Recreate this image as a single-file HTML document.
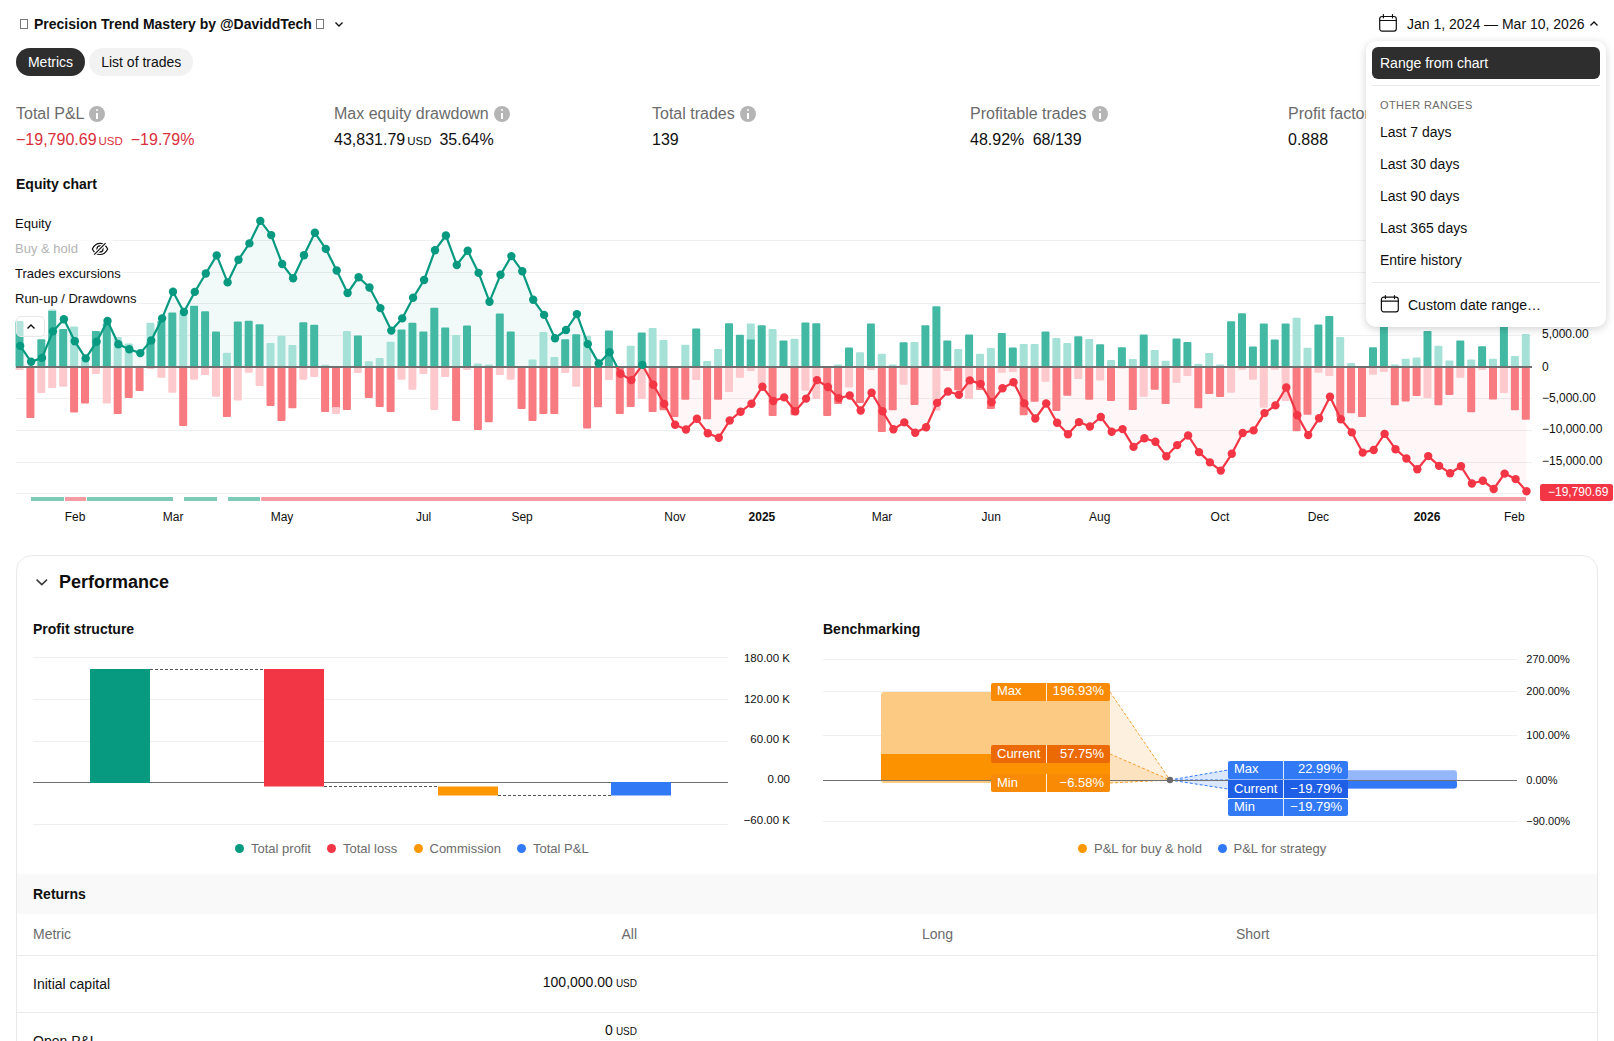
<!DOCTYPE html>
<html><head><meta charset="utf-8">
<style>
*{box-sizing:border-box;margin:0;padding:0}
html,body{width:1614px;height:1041px;overflow:hidden;background:#fff;font-family:"Liberation Sans",sans-serif;color:#0f0f0f}
.a{position:absolute;white-space:nowrap}
.tofu{display:inline-block;width:8px;height:10px;border:1px solid #333;vertical-align:-1px}
.pill{position:absolute;top:48px;height:28px;border-radius:14px;font-size:14px;line-height:28px;text-align:center}
.mlab{position:absolute;top:105px;font-size:16px;color:#6b6b6b;line-height:18px}
.info{display:inline-block;width:16px;height:16px;border-radius:50%;background:#b5b5b5;vertical-align:-3px;margin-left:5px;position:relative}
.info:before{content:"";position:absolute;left:7px;top:2.8px;width:2px;height:2px;background:#fff;border-radius:1px}
.info:after{content:"";position:absolute;left:7px;top:6.5px;width:2px;height:6px;background:#fff}
.mval{position:absolute;top:130.7px;font-size:16px;line-height:18px;color:#0f0f0f}
.usd{font-size:11.5px;margin-left:2px;margin-right:3.5px}
.red{color:#d92f3d}
.leg{position:absolute;left:15px;margin-top:0.7px;font-size:13px;line-height:16px;color:#0f0f0f}
.ylab{position:absolute;left:1542px;font-size:12px;line-height:14px;color:#0f0f0f}
.xlab{position:absolute;top:510px;font-size:12px;line-height:14px;color:#0f0f0f;transform:translateX(-50%)}
.dd{position:absolute;left:1366px;top:41px;width:240px;height:286px;background:#fff;border-radius:10px;box-shadow:0 2px 8px rgba(0,0,0,.18)}
.ddi{position:absolute;left:14px;font-size:14px;line-height:16px;color:#0f0f0f}
.sep{position:absolute;left:6px;width:228px;height:1px;background:#e9e9e9}
.card{position:absolute;left:16px;top:555px;width:1582px;height:600px;border:1px solid #e9e9e9;border-radius:16px;background:#fff}
.sub{position:absolute;font-size:14px;font-weight:bold;line-height:16px;color:#0f0f0f}
.axl{position:absolute;font-size:11.5px;line-height:13px;color:#0f0f0f}
.lg{position:absolute;top:841px;font-size:13px;line-height:15px;color:#6b6b6b}
.dot{position:absolute;top:844px;width:9px;height:9px;border-radius:50%}
.bl{position:absolute;left:991px;width:119px;height:17.6px;border-radius:2px;color:#fff;font-size:13px;line-height:16px}
.bl span{position:absolute;left:6px}
.bl b{font-weight:normal;position:absolute;right:6px}
.bl:after{content:"";position:absolute;left:55px;top:0;width:1px;height:100%;background:rgba(255,255,255,.85)}
.bb{left:1228px;width:120px}
</style></head><body>

<!-- header -->
<div class="a" style="left:20px;top:19px;width:8px;height:10px;border:1px solid #7a7a7a"></div><div class="a" style="left:34px;top:16px;font-size:14px;font-weight:bold;line-height:17px">Precision Trend Mastery by @DaviddTech</div><div class="a" style="left:316px;top:19px;width:8px;height:10px;border:1px solid #7a7a7a"></div>
<svg class="a" style="left:333px;top:18px" width="12" height="12" viewBox="0 0 12 12"><path d="M2.5 4.5 L6 8 L9.5 4.5" fill="none" stroke="#0f0f0f" stroke-width="1.3"/></svg>

<div class="pill" style="left:16px;width:69px;background:#2e2e2e;color:#fff">Metrics</div>
<div class="pill" style="left:89px;width:103.5px;padding-left:1px;background:#f2f2f2;color:#0f0f0f">List of trades</div>

<!-- date picker -->
<svg class="a" style="left:1378px;top:13px" width="20" height="20" viewBox="0 0 20 20"><rect x="1.7" y="3.5" width="16.6" height="14.6" rx="2.3" fill="none" stroke="#0f0f0f" stroke-width="1.2"/><path d="M1.7 7.5H18.3M5.4 1.6V4.8M14.5 1.6V4.8" stroke="#0f0f0f" stroke-width="1.2" stroke-linecap="round"/></svg>
<div class="a" style="left:1407px;top:16px;font-size:14px;line-height:16px">Jan 1, 2024 — Mar 10, 2026</div>
<svg class="a" style="left:1588px;top:18px" width="12" height="12" viewBox="0 0 12 12"><path d="M2.5 7.5 L6 4 L9.5 7.5" fill="none" stroke="#0f0f0f" stroke-width="1.3"/></svg>

<!-- metrics -->
<div class="mlab" style="left:16px">Total P&amp;L<span class="info"></span></div>
<div class="mval red" style="left:16px">−19,790.69<span class="usd">USD</span> −19.79%</div>
<div class="mlab" style="left:334px">Max equity drawdown<span class="info"></span></div>
<div class="mval" style="left:334px">43,831.79<span class="usd">USD</span> 35.64%</div>
<div class="mlab" style="left:652px">Total trades<span class="info"></span></div>
<div class="mval" style="left:652px">139</div>
<div class="mlab" style="left:970px">Profitable trades<span class="info"></span></div>
<div class="mval" style="left:970px">48.92% <span style="margin-left:4px">68/139</span></div>
<div class="mlab" style="left:1288px">Profit factor</div>
<div class="mval" style="left:1288px">0.888</div>

<!-- equity chart -->
<div class="sub" style="left:16px;top:176px;font-size:14px">Equity chart</div>
<svg class="a" style="left:0;top:0" width="1614" height="540" viewBox="0 0 1614 540">
<defs><clipPath id="cu"><rect x="0" y="0" width="1614" height="367"/></clipPath><clipPath id="cd"><rect x="0" y="367" width="1614" height="200"/></clipPath></defs>
<rect x="16" y="240.0" width="1516" height="1" fill="#efefef"/>
<rect x="16" y="272.0" width="1516" height="1" fill="#efefef"/>
<rect x="16" y="303.0" width="1516" height="1" fill="#efefef"/>
<rect x="16" y="335.0" width="1516" height="1" fill="#efefef"/>
<rect x="16" y="398.0" width="1516" height="1" fill="#efefef"/>
<rect x="16" y="430.0" width="1516" height="1" fill="#efefef"/>
<rect x="16" y="462.0" width="1516" height="1" fill="#efefef"/>
<rect x="16" y="493.0" width="1516" height="1" fill="#efefef"/>
<polygon points="20.2,367.0 20.2,345.9 31.1,361.8 42.0,357.9 52.9,331.4 63.9,319.2 74.8,341.3 85.7,358.4 96.6,341.8 107.5,321.0 118.4,344.3 129.3,349.2 140.3,353.1 151.2,340.5 162.1,318.4 173.0,291.7 183.9,312.0 194.8,291.9 205.8,273.5 216.7,255.4 227.6,282.4 238.5,259.7 249.4,243.4 260.3,220.9 271.2,235.1 282.2,264.0 293.1,278.3 304.0,255.3 314.9,232.8 325.8,248.9 336.7,270.5 347.6,293.0 358.6,277.2 369.5,287.5 380.4,308.1 391.3,330.6 402.2,318.4 413.1,297.8 424.1,280.0 435.0,250.2 445.9,235.5 456.8,265.0 467.7,250.7 478.6,272.9 489.5,301.7 500.5,274.8 511.4,256.1 522.3,271.3 533.2,299.8 544.1,314.9 555.0,338.2 566.0,330.0 576.9,314.1 587.8,344.1 598.7,363.4 609.6,352.2 620.5,373.7 631.4,380.1 642.4,364.9 653.3,384.8 664.2,403.9 675.1,424.8 686.0,429.5 696.9,418.8 707.8,433.2 718.8,437.8 729.7,420.5 740.6,411.7 751.5,403.7 762.4,386.7 773.3,401.0 784.2,397.4 795.2,411.3 806.1,398.6 817.0,380.1 827.9,387.0 838.8,398.2 849.7,395.5 860.7,410.5 871.6,392.8 882.5,411.3 893.4,429.2 904.3,422.4 915.2,432.7 926.1,427.2 937.1,402.9 948.0,391.5 958.9,394.7 969.8,380.4 980.7,383.9 991.6,402.3 1002.5,388.3 1013.5,382.3 1024.4,403.4 1035.3,418.5 1046.2,403.5 1057.1,422.7 1068.0,434.2 1079.0,422.1 1089.9,426.5 1100.8,417.0 1111.7,431.7 1122.6,429.1 1133.5,446.9 1144.4,438.2 1155.4,441.7 1166.3,456.2 1177.2,445.1 1188.1,435.5 1199.0,452.1 1209.9,462.4 1220.8,470.6 1231.8,453.8 1242.7,433.0 1253.6,430.4 1264.5,413.1 1275.4,405.4 1286.3,387.5 1297.3,415.2 1308.2,435.1 1319.1,418.2 1330.0,396.7 1340.9,419.3 1351.8,432.4 1362.7,452.6 1373.7,450.0 1384.6,433.9 1395.5,449.2 1406.4,458.5 1417.3,469.3 1428.2,456.1 1439.1,465.9 1450.1,473.2 1461.0,466.3 1471.9,483.5 1482.8,480.7 1493.7,489.0 1504.6,473.6 1515.6,479.1 1526.5,491.3 1526.5,367.0" fill="rgba(8,153,129,0.05)" clip-path="url(#cu)"/>
<polygon points="20.2,367.0 20.2,345.9 31.1,361.8 42.0,357.9 52.9,331.4 63.9,319.2 74.8,341.3 85.7,358.4 96.6,341.8 107.5,321.0 118.4,344.3 129.3,349.2 140.3,353.1 151.2,340.5 162.1,318.4 173.0,291.7 183.9,312.0 194.8,291.9 205.8,273.5 216.7,255.4 227.6,282.4 238.5,259.7 249.4,243.4 260.3,220.9 271.2,235.1 282.2,264.0 293.1,278.3 304.0,255.3 314.9,232.8 325.8,248.9 336.7,270.5 347.6,293.0 358.6,277.2 369.5,287.5 380.4,308.1 391.3,330.6 402.2,318.4 413.1,297.8 424.1,280.0 435.0,250.2 445.9,235.5 456.8,265.0 467.7,250.7 478.6,272.9 489.5,301.7 500.5,274.8 511.4,256.1 522.3,271.3 533.2,299.8 544.1,314.9 555.0,338.2 566.0,330.0 576.9,314.1 587.8,344.1 598.7,363.4 609.6,352.2 620.5,373.7 631.4,380.1 642.4,364.9 653.3,384.8 664.2,403.9 675.1,424.8 686.0,429.5 696.9,418.8 707.8,433.2 718.8,437.8 729.7,420.5 740.6,411.7 751.5,403.7 762.4,386.7 773.3,401.0 784.2,397.4 795.2,411.3 806.1,398.6 817.0,380.1 827.9,387.0 838.8,398.2 849.7,395.5 860.7,410.5 871.6,392.8 882.5,411.3 893.4,429.2 904.3,422.4 915.2,432.7 926.1,427.2 937.1,402.9 948.0,391.5 958.9,394.7 969.8,380.4 980.7,383.9 991.6,402.3 1002.5,388.3 1013.5,382.3 1024.4,403.4 1035.3,418.5 1046.2,403.5 1057.1,422.7 1068.0,434.2 1079.0,422.1 1089.9,426.5 1100.8,417.0 1111.7,431.7 1122.6,429.1 1133.5,446.9 1144.4,438.2 1155.4,441.7 1166.3,456.2 1177.2,445.1 1188.1,435.5 1199.0,452.1 1209.9,462.4 1220.8,470.6 1231.8,453.8 1242.7,433.0 1253.6,430.4 1264.5,413.1 1275.4,405.4 1286.3,387.5 1297.3,415.2 1308.2,435.1 1319.1,418.2 1330.0,396.7 1340.9,419.3 1351.8,432.4 1362.7,452.6 1373.7,450.0 1384.6,433.9 1395.5,449.2 1406.4,458.5 1417.3,469.3 1428.2,456.1 1439.1,465.9 1450.1,473.2 1461.0,466.3 1471.9,483.5 1482.8,480.7 1493.7,489.0 1504.6,473.6 1515.6,479.1 1526.5,491.3 1526.5,367.0" fill="rgba(242,54,69,0.045)" clip-path="url(#cd)"/>
<rect x="15.5" y="321.0" width="8" height="46.0" rx="1" fill="#43b9a3"/>
<rect x="15.5" y="367.0" width="8" height="2.9" rx="1" fill="#fdc9cc"/>
<rect x="26.4" y="367.0" width="8" height="51.0" rx="1" fill="#f77b80"/>
<rect x="37.3" y="339.3" width="8" height="27.7" rx="1" fill="#43b9a3"/>
<rect x="37.3" y="367.0" width="8" height="26.0" rx="1" fill="#fdc9cc"/>
<rect x="48.2" y="309.4" width="8" height="57.6" rx="1" fill="#43b9a3"/>
<rect x="48.2" y="367.0" width="8" height="21.0" rx="1" fill="#fdc9cc"/>
<rect x="59.2" y="329.0" width="8" height="38.0" rx="1" fill="#43b9a3"/>
<rect x="59.2" y="367.0" width="8" height="19.8" rx="1" fill="#fdc9cc"/>
<rect x="70.1" y="326.6" width="8" height="40.4" rx="1" fill="#a6e1d8"/>
<rect x="70.1" y="367.0" width="8" height="45.4" rx="1" fill="#f77b80"/>
<rect x="81.0" y="360.0" width="8" height="7.0" rx="1" fill="#a6e1d8"/>
<rect x="81.0" y="367.0" width="8" height="36.4" rx="1" fill="#f77b80"/>
<rect x="91.9" y="331.0" width="8" height="36.0" rx="1" fill="#43b9a3"/>
<rect x="91.9" y="367.0" width="8" height="6.9" rx="1" fill="#fdc9cc"/>
<rect x="102.8" y="323.2" width="8" height="43.8" rx="1" fill="#43b9a3"/>
<rect x="102.8" y="367.0" width="8" height="36.6" rx="1" fill="#fdc9cc"/>
<rect x="113.7" y="336.9" width="8" height="30.1" rx="1" fill="#a6e1d8"/>
<rect x="113.7" y="367.0" width="8" height="47.0" rx="1" fill="#f77b80"/>
<rect x="124.7" y="343.4" width="8" height="23.6" rx="1" fill="#a6e1d8"/>
<rect x="124.7" y="367.0" width="8" height="31.0" rx="1" fill="#f77b80"/>
<rect x="135.6" y="365.7" width="8" height="1.3" rx="1" fill="#a6e1d8"/>
<rect x="135.6" y="367.0" width="8" height="24.0" rx="1" fill="#f77b80"/>
<rect x="146.5" y="322.7" width="8" height="44.3" rx="1" fill="#a6e1d8"/>
<rect x="146.5" y="342.0" width="8" height="25.0" fill="#43b9a3"/>
<rect x="146.5" y="367.0" width="8" height="2.1" rx="1" fill="#fdc9cc"/>
<rect x="157.4" y="320.8" width="8" height="46.2" rx="1" fill="#43b9a3"/>
<rect x="157.4" y="367.0" width="8" height="10.8" rx="1" fill="#fdc9cc"/>
<rect x="168.3" y="312.5" width="8" height="54.5" rx="1" fill="#43b9a3"/>
<rect x="168.3" y="367.0" width="8" height="25.7" rx="1" fill="#fdc9cc"/>
<rect x="179.2" y="312.8" width="8" height="54.2" rx="1" fill="#a6e1d8"/>
<rect x="179.2" y="367.0" width="8" height="58.9" rx="1" fill="#f77b80"/>
<rect x="190.1" y="305.7" width="8" height="61.3" rx="1" fill="#43b9a3"/>
<rect x="190.1" y="367.0" width="8" height="12.8" rx="1" fill="#fdc9cc"/>
<rect x="201.1" y="311.2" width="8" height="55.8" rx="1" fill="#43b9a3"/>
<rect x="201.1" y="367.0" width="8" height="7.9" rx="1" fill="#fdc9cc"/>
<rect x="212.0" y="331.4" width="8" height="35.6" rx="1" fill="#43b9a3"/>
<rect x="212.0" y="367.0" width="8" height="29.7" rx="1" fill="#fdc9cc"/>
<rect x="222.9" y="352.8" width="8" height="14.2" rx="1" fill="#a6e1d8"/>
<rect x="222.9" y="367.0" width="8" height="50.0" rx="1" fill="#f77b80"/>
<rect x="233.8" y="321.6" width="8" height="45.4" rx="1" fill="#43b9a3"/>
<rect x="233.8" y="367.0" width="8" height="33.6" rx="1" fill="#fdc9cc"/>
<rect x="244.7" y="320.8" width="8" height="46.2" rx="1" fill="#43b9a3"/>
<rect x="244.7" y="367.0" width="8" height="5.7" rx="1" fill="#fdc9cc"/>
<rect x="255.6" y="324.3" width="8" height="42.7" rx="1" fill="#43b9a3"/>
<rect x="255.6" y="367.0" width="8" height="19.0" rx="1" fill="#fdc9cc"/>
<rect x="266.5" y="343.0" width="8" height="24.0" rx="1" fill="#a6e1d8"/>
<rect x="266.5" y="367.0" width="8" height="39.1" rx="1" fill="#f77b80"/>
<rect x="277.5" y="335.8" width="8" height="31.2" rx="1" fill="#a6e1d8"/>
<rect x="277.5" y="367.0" width="8" height="54.0" rx="1" fill="#f77b80"/>
<rect x="288.4" y="344.9" width="8" height="22.1" rx="1" fill="#a6e1d8"/>
<rect x="288.4" y="367.0" width="8" height="41.2" rx="1" fill="#f77b80"/>
<rect x="299.3" y="322.3" width="8" height="44.7" rx="1" fill="#43b9a3"/>
<rect x="299.3" y="367.0" width="8" height="12.8" rx="1" fill="#fdc9cc"/>
<rect x="310.2" y="324.7" width="8" height="42.3" rx="1" fill="#43b9a3"/>
<rect x="310.2" y="367.0" width="8" height="9.9" rx="1" fill="#fdc9cc"/>
<rect x="321.1" y="364.8" width="8" height="2.2" rx="1" fill="#a6e1d8"/>
<rect x="321.1" y="367.0" width="8" height="45.0" rx="1" fill="#f77b80"/>
<rect x="332.0" y="367.0" width="8" height="47.0" rx="1" fill="#fdc9cc"/>
<rect x="332.0" y="367.0" width="8" height="40.1" fill="#f77b80"/>
<rect x="342.9" y="331.1" width="8" height="35.9" rx="1" fill="#a6e1d8"/>
<rect x="342.9" y="367.0" width="8" height="43.1" rx="1" fill="#f77b80"/>
<rect x="353.9" y="335.4" width="8" height="31.6" rx="1" fill="#43b9a3"/>
<rect x="353.9" y="367.0" width="8" height="5.9" rx="1" fill="#fdc9cc"/>
<rect x="364.8" y="361.2" width="8" height="5.8" rx="1" fill="#a6e1d8"/>
<rect x="364.8" y="367.0" width="8" height="31.0" rx="1" fill="#f77b80"/>
<rect x="375.7" y="358.0" width="8" height="9.0" rx="1" fill="#a6e1d8"/>
<rect x="375.7" y="367.0" width="8" height="40.1" rx="1" fill="#f77b80"/>
<rect x="386.6" y="341.7" width="8" height="25.3" rx="1" fill="#a6e1d8"/>
<rect x="386.6" y="367.0" width="8" height="45.0" rx="1" fill="#f77b80"/>
<rect x="397.5" y="329.5" width="8" height="37.5" rx="1" fill="#43b9a3"/>
<rect x="397.5" y="367.0" width="8" height="12.8" rx="1" fill="#fdc9cc"/>
<rect x="408.4" y="322.7" width="8" height="44.3" rx="1" fill="#43b9a3"/>
<rect x="408.4" y="367.0" width="8" height="22.7" rx="1" fill="#fdc9cc"/>
<rect x="419.4" y="331.4" width="8" height="35.6" rx="1" fill="#43b9a3"/>
<rect x="419.4" y="367.0" width="8" height="6.9" rx="1" fill="#fdc9cc"/>
<rect x="430.3" y="307.8" width="8" height="59.2" rx="1" fill="#43b9a3"/>
<rect x="430.3" y="367.0" width="8" height="43.1" rx="1" fill="#fdc9cc"/>
<rect x="441.2" y="327.4" width="8" height="39.6" rx="1" fill="#43b9a3"/>
<rect x="441.2" y="367.0" width="8" height="9.9" rx="1" fill="#fdc9cc"/>
<rect x="452.1" y="335.0" width="8" height="32.0" rx="1" fill="#a6e1d8"/>
<rect x="452.1" y="367.0" width="8" height="54.0" rx="1" fill="#f77b80"/>
<rect x="463.0" y="325.5" width="8" height="41.5" rx="1" fill="#43b9a3"/>
<rect x="463.0" y="367.0" width="8" height="2.9" rx="1" fill="#fdc9cc"/>
<rect x="473.9" y="363.6" width="8" height="3.4" rx="1" fill="#a6e1d8"/>
<rect x="473.9" y="367.0" width="8" height="62.9" rx="1" fill="#f77b80"/>
<rect x="484.8" y="364.4" width="8" height="2.6" rx="1" fill="#a6e1d8"/>
<rect x="484.8" y="367.0" width="8" height="55.2" rx="1" fill="#f77b80"/>
<rect x="495.8" y="313.6" width="8" height="53.4" rx="1" fill="#43b9a3"/>
<rect x="495.8" y="367.0" width="8" height="7.9" rx="1" fill="#fdc9cc"/>
<rect x="506.7" y="331.4" width="8" height="35.6" rx="1" fill="#43b9a3"/>
<rect x="506.7" y="367.0" width="8" height="12.8" rx="1" fill="#fdc9cc"/>
<rect x="517.6" y="367.0" width="8" height="42.1" rx="1" fill="#f77b80"/>
<rect x="528.5" y="359.6" width="8" height="7.4" rx="1" fill="#a6e1d8"/>
<rect x="528.5" y="367.0" width="8" height="54.0" rx="1" fill="#f77b80"/>
<rect x="539.4" y="331.9" width="8" height="35.1" rx="1" fill="#a6e1d8"/>
<rect x="539.4" y="367.0" width="8" height="47.0" rx="1" fill="#f77b80"/>
<rect x="550.3" y="357.0" width="8" height="10.0" rx="1" fill="#a6e1d8"/>
<rect x="550.3" y="367.0" width="8" height="47.0" rx="1" fill="#f77b80"/>
<rect x="561.2" y="339.3" width="8" height="27.7" rx="1" fill="#43b9a3"/>
<rect x="561.2" y="367.0" width="8" height="5.9" rx="1" fill="#fdc9cc"/>
<rect x="572.2" y="334.2" width="8" height="32.8" rx="1" fill="#43b9a3"/>
<rect x="572.2" y="367.0" width="8" height="19.8" rx="1" fill="#fdc9cc"/>
<rect x="583.1" y="335.8" width="8" height="31.2" rx="1" fill="#a6e1d8"/>
<rect x="583.1" y="367.0" width="8" height="61.5" rx="1" fill="#f77b80"/>
<rect x="594.0" y="367.0" width="8" height="40.3" rx="1" fill="#f77b80"/>
<rect x="604.9" y="330.4" width="8" height="36.6" rx="1" fill="#43b9a3"/>
<rect x="604.9" y="367.0" width="8" height="13.1" rx="1" fill="#fdc9cc"/>
<rect x="615.8" y="367.0" width="8" height="47.0" rx="1" fill="#f77b80"/>
<rect x="626.7" y="345.8" width="8" height="21.2" rx="1" fill="#a6e1d8"/>
<rect x="626.7" y="367.0" width="8" height="40.0" rx="1" fill="#f77b80"/>
<rect x="637.7" y="332.5" width="8" height="34.5" rx="1" fill="#43b9a3"/>
<rect x="637.7" y="367.0" width="8" height="32.1" rx="1" fill="#fdc9cc"/>
<rect x="648.6" y="328.1" width="8" height="38.9" rx="1" fill="#a6e1d8"/>
<rect x="648.6" y="367.0" width="8" height="45.1" rx="1" fill="#f77b80"/>
<rect x="659.5" y="340.0" width="8" height="27.0" rx="1" fill="#a6e1d8"/>
<rect x="659.5" y="367.0" width="8" height="43.2" rx="1" fill="#f77b80"/>
<rect x="670.4" y="367.0" width="8" height="49.9" rx="1" fill="#f77b80"/>
<rect x="681.3" y="344.7" width="8" height="22.3" rx="1" fill="#a6e1d8"/>
<rect x="681.3" y="367.0" width="8" height="32.7" rx="1" fill="#f77b80"/>
<rect x="692.2" y="328.4" width="8" height="38.6" rx="1" fill="#43b9a3"/>
<rect x="692.2" y="367.0" width="8" height="13.1" rx="1" fill="#fdc9cc"/>
<rect x="703.1" y="360.9" width="8" height="6.1" rx="1" fill="#a6e1d8"/>
<rect x="703.1" y="367.0" width="8" height="52.2" rx="1" fill="#f77b80"/>
<rect x="714.1" y="349.0" width="8" height="18.0" rx="1" fill="#a6e1d8"/>
<rect x="714.1" y="367.0" width="8" height="32.7" rx="1" fill="#f77b80"/>
<rect x="725.0" y="323.3" width="8" height="43.7" rx="1" fill="#43b9a3"/>
<rect x="725.0" y="367.0" width="8" height="25.0" rx="1" fill="#fdc9cc"/>
<rect x="735.9" y="334.7" width="8" height="32.3" rx="1" fill="#43b9a3"/>
<rect x="735.9" y="367.0" width="8" height="10.8" rx="1" fill="#fdc9cc"/>
<rect x="746.8" y="323.6" width="8" height="43.4" rx="1" fill="#a6e1d8"/>
<rect x="746.8" y="339.5" width="8" height="27.5" fill="#43b9a3"/>
<rect x="746.8" y="367.0" width="8" height="3.9" rx="1" fill="#fdc9cc"/>
<rect x="757.7" y="325.2" width="8" height="41.8" rx="1" fill="#43b9a3"/>
<rect x="757.7" y="367.0" width="8" height="17.4" rx="1" fill="#fdc9cc"/>
<rect x="768.6" y="328.9" width="8" height="38.1" rx="1" fill="#a6e1d8"/>
<rect x="768.6" y="367.0" width="8" height="49.1" rx="1" fill="#f77b80"/>
<rect x="779.5" y="340.4" width="8" height="26.6" rx="1" fill="#43b9a3"/>
<rect x="790.5" y="338.8" width="8" height="28.2" rx="1" fill="#a6e1d8"/>
<rect x="790.5" y="367.0" width="8" height="48.3" rx="1" fill="#f77b80"/>
<rect x="801.4" y="322.5" width="8" height="44.5" rx="1" fill="#43b9a3"/>
<rect x="801.4" y="367.0" width="8" height="23.7" rx="1" fill="#fdc9cc"/>
<rect x="812.3" y="323.3" width="8" height="43.7" rx="1" fill="#43b9a3"/>
<rect x="812.3" y="367.0" width="8" height="32.1" rx="1" fill="#fdc9cc"/>
<rect x="823.2" y="367.0" width="8" height="49.1" rx="1" fill="#f77b80"/>
<rect x="834.1" y="364.5" width="8" height="2.5" rx="1" fill="#a6e1d8"/>
<rect x="834.1" y="367.0" width="8" height="36.9" rx="1" fill="#f77b80"/>
<rect x="845.0" y="347.4" width="8" height="19.6" rx="1" fill="#43b9a3"/>
<rect x="845.0" y="367.0" width="8" height="20.5" rx="1" fill="#fdc9cc"/>
<rect x="856.0" y="352.2" width="8" height="14.8" rx="1" fill="#a6e1d8"/>
<rect x="856.0" y="367.0" width="8" height="35.9" rx="1" fill="#f77b80"/>
<rect x="866.9" y="323.6" width="8" height="43.4" rx="1" fill="#43b9a3"/>
<rect x="866.9" y="367.0" width="8" height="3.1" rx="1" fill="#fdc9cc"/>
<rect x="877.8" y="353.7" width="8" height="13.3" rx="1" fill="#a6e1d8"/>
<rect x="877.8" y="367.0" width="8" height="64.9" rx="1" fill="#f77b80"/>
<rect x="888.7" y="364.5" width="8" height="2.5" rx="1" fill="#a6e1d8"/>
<rect x="888.7" y="367.0" width="8" height="43.2" rx="1" fill="#f77b80"/>
<rect x="899.6" y="342.3" width="8" height="24.7" rx="1" fill="#43b9a3"/>
<rect x="899.6" y="367.0" width="8" height="17.8" rx="1" fill="#fdc9cc"/>
<rect x="910.5" y="342.0" width="8" height="25.0" rx="1" fill="#a6e1d8"/>
<rect x="910.5" y="367.0" width="8" height="38.0" rx="1" fill="#f77b80"/>
<rect x="921.4" y="325.2" width="8" height="41.8" rx="1" fill="#43b9a3"/>
<rect x="932.4" y="306.3" width="8" height="60.7" rx="1" fill="#43b9a3"/>
<rect x="932.4" y="367.0" width="8" height="43.8" rx="1" fill="#fdc9cc"/>
<rect x="943.3" y="340.4" width="8" height="26.6" rx="1" fill="#43b9a3"/>
<rect x="943.3" y="367.0" width="8" height="3.9" rx="1" fill="#fdc9cc"/>
<rect x="954.2" y="349.0" width="8" height="18.0" rx="1" fill="#a6e1d8"/>
<rect x="954.2" y="367.0" width="8" height="23.2" rx="1" fill="#f77b80"/>
<rect x="965.1" y="334.4" width="8" height="32.6" rx="1" fill="#43b9a3"/>
<rect x="965.1" y="367.0" width="8" height="32.1" rx="1" fill="#fdc9cc"/>
<rect x="976.0" y="353.7" width="8" height="13.3" rx="1" fill="#a6e1d8"/>
<rect x="976.0" y="367.0" width="8" height="22.9" rx="1" fill="#f77b80"/>
<rect x="986.9" y="347.9" width="8" height="19.1" rx="1" fill="#a6e1d8"/>
<rect x="986.9" y="367.0" width="8" height="41.9" rx="1" fill="#f77b80"/>
<rect x="997.8" y="333.1" width="8" height="33.9" rx="1" fill="#43b9a3"/>
<rect x="997.8" y="367.0" width="8" height="5.8" rx="1" fill="#fdc9cc"/>
<rect x="1008.8" y="347.4" width="8" height="19.6" rx="1" fill="#43b9a3"/>
<rect x="1008.8" y="367.0" width="8" height="5.1" rx="1" fill="#fdc9cc"/>
<rect x="1019.7" y="343.9" width="8" height="23.1" rx="1" fill="#a6e1d8"/>
<rect x="1019.7" y="367.0" width="8" height="48.3" rx="1" fill="#f77b80"/>
<rect x="1030.6" y="343.9" width="8" height="23.1" rx="1" fill="#a6e1d8"/>
<rect x="1030.6" y="367.0" width="8" height="34.8" rx="1" fill="#f77b80"/>
<rect x="1041.5" y="331.4" width="8" height="35.6" rx="1" fill="#43b9a3"/>
<rect x="1041.5" y="367.0" width="8" height="14.8" rx="1" fill="#fdc9cc"/>
<rect x="1052.4" y="337.9" width="8" height="29.1" rx="1" fill="#a6e1d8"/>
<rect x="1052.4" y="367.0" width="8" height="43.9" rx="1" fill="#f77b80"/>
<rect x="1063.3" y="343.1" width="8" height="23.9" rx="1" fill="#a6e1d8"/>
<rect x="1063.3" y="367.0" width="8" height="28.8" rx="1" fill="#f77b80"/>
<rect x="1074.3" y="336.2" width="8" height="30.8" rx="1" fill="#43b9a3"/>
<rect x="1074.3" y="367.0" width="8" height="11.9" rx="1" fill="#fdc9cc"/>
<rect x="1085.2" y="339.1" width="8" height="27.9" rx="1" fill="#a6e1d8"/>
<rect x="1085.2" y="367.0" width="8" height="32.7" rx="1" fill="#f77b80"/>
<rect x="1096.1" y="344.3" width="8" height="22.7" rx="1" fill="#43b9a3"/>
<rect x="1096.1" y="367.0" width="8" height="13.6" rx="1" fill="#fdc9cc"/>
<rect x="1107.0" y="359.9" width="8" height="7.1" rx="1" fill="#a6e1d8"/>
<rect x="1107.0" y="367.0" width="8" height="33.9" rx="1" fill="#f77b80"/>
<rect x="1117.9" y="347.2" width="8" height="19.8" rx="1" fill="#43b9a3"/>
<rect x="1117.9" y="367.0" width="8" height="1.5" rx="1" fill="#fdc9cc"/>
<rect x="1128.8" y="359.0" width="8" height="8.0" rx="1" fill="#a6e1d8"/>
<rect x="1128.8" y="367.0" width="8" height="43.0" rx="1" fill="#f77b80"/>
<rect x="1139.7" y="334.4" width="8" height="32.6" rx="1" fill="#43b9a3"/>
<rect x="1139.7" y="367.0" width="8" height="29.7" rx="1" fill="#fdc9cc"/>
<rect x="1150.7" y="350.0" width="8" height="17.0" rx="1" fill="#a6e1d8"/>
<rect x="1150.7" y="367.0" width="8" height="22.8" rx="1" fill="#f77b80"/>
<rect x="1161.6" y="360.7" width="8" height="6.3" rx="1" fill="#a6e1d8"/>
<rect x="1161.6" y="367.0" width="8" height="37.0" rx="1" fill="#f77b80"/>
<rect x="1172.5" y="338.6" width="8" height="28.4" rx="1" fill="#43b9a3"/>
<rect x="1172.5" y="367.0" width="8" height="15.9" rx="1" fill="#fdc9cc"/>
<rect x="1183.4" y="342.1" width="8" height="24.9" rx="1" fill="#43b9a3"/>
<rect x="1183.4" y="367.0" width="8" height="9.0" rx="1" fill="#fdc9cc"/>
<rect x="1194.3" y="363.8" width="8" height="3.2" rx="1" fill="#a6e1d8"/>
<rect x="1194.3" y="367.0" width="8" height="41.3" rx="1" fill="#f77b80"/>
<rect x="1205.2" y="353.0" width="8" height="14.0" rx="1" fill="#a6e1d8"/>
<rect x="1205.2" y="367.0" width="8" height="26.9" rx="1" fill="#f77b80"/>
<rect x="1216.1" y="364.5" width="8" height="2.5" rx="1" fill="#a6e1d8"/>
<rect x="1216.1" y="367.0" width="8" height="30.1" rx="1" fill="#f77b80"/>
<rect x="1227.1" y="321.3" width="8" height="45.7" rx="1" fill="#43b9a3"/>
<rect x="1227.1" y="367.0" width="8" height="25.7" rx="1" fill="#fdc9cc"/>
<rect x="1238.0" y="313.2" width="8" height="53.8" rx="1" fill="#43b9a3"/>
<rect x="1238.0" y="367.0" width="8" height="2.7" rx="1" fill="#fdc9cc"/>
<rect x="1248.9" y="346.5" width="8" height="20.5" rx="1" fill="#43b9a3"/>
<rect x="1248.9" y="367.0" width="8" height="12.8" rx="1" fill="#fdc9cc"/>
<rect x="1259.8" y="323.5" width="8" height="43.5" rx="1" fill="#43b9a3"/>
<rect x="1259.8" y="367.0" width="8" height="40.8" rx="1" fill="#fdc9cc"/>
<rect x="1270.7" y="339.6" width="8" height="27.4" rx="1" fill="#43b9a3"/>
<rect x="1270.7" y="367.0" width="8" height="2.7" rx="1" fill="#fdc9cc"/>
<rect x="1281.6" y="323.5" width="8" height="43.5" rx="1" fill="#43b9a3"/>
<rect x="1281.6" y="367.0" width="8" height="33.9" rx="1" fill="#fdc9cc"/>
<rect x="1292.6" y="317.8" width="8" height="49.2" rx="1" fill="#a6e1d8"/>
<rect x="1292.6" y="367.0" width="8" height="64.3" rx="1" fill="#f77b80"/>
<rect x="1303.5" y="347.8" width="8" height="19.2" rx="1" fill="#a6e1d8"/>
<rect x="1303.5" y="367.0" width="8" height="47.7" rx="1" fill="#f77b80"/>
<rect x="1314.4" y="324.4" width="8" height="42.6" rx="1" fill="#43b9a3"/>
<rect x="1314.4" y="367.0" width="8" height="5.8" rx="1" fill="#fdc9cc"/>
<rect x="1325.3" y="316.1" width="8" height="50.9" rx="1" fill="#43b9a3"/>
<rect x="1325.3" y="367.0" width="8" height="9.0" rx="1" fill="#fdc9cc"/>
<rect x="1336.2" y="337.0" width="8" height="30.0" rx="1" fill="#a6e1d8"/>
<rect x="1336.2" y="367.0" width="8" height="50.0" rx="1" fill="#f77b80"/>
<rect x="1347.1" y="363.0" width="8" height="4.0" rx="1" fill="#a6e1d8"/>
<rect x="1347.1" y="367.0" width="8" height="46.3" rx="1" fill="#f77b80"/>
<rect x="1358.0" y="367.0" width="8" height="50.1" rx="1" fill="#f77b80"/>
<rect x="1369.0" y="347.2" width="8" height="19.8" rx="1" fill="#43b9a3"/>
<rect x="1369.0" y="367.0" width="8" height="7.8" rx="1" fill="#fdc9cc"/>
<rect x="1379.9" y="315.0" width="8" height="52.0" rx="1" fill="#43b9a3"/>
<rect x="1379.9" y="367.0" width="8" height="4.9" rx="1" fill="#fdc9cc"/>
<rect x="1390.8" y="364.6" width="8" height="2.4" rx="1" fill="#a6e1d8"/>
<rect x="1390.8" y="367.0" width="8" height="38.3" rx="1" fill="#f77b80"/>
<rect x="1401.7" y="358.7" width="8" height="8.3" rx="1" fill="#a6e1d8"/>
<rect x="1401.7" y="367.0" width="8" height="34.4" rx="1" fill="#f77b80"/>
<rect x="1412.6" y="357.5" width="8" height="9.5" rx="1" fill="#a6e1d8"/>
<rect x="1412.6" y="367.0" width="8" height="29.1" rx="1" fill="#f77b80"/>
<rect x="1423.5" y="331.1" width="8" height="35.9" rx="1" fill="#43b9a3"/>
<rect x="1423.5" y="367.0" width="8" height="31.0" rx="1" fill="#fdc9cc"/>
<rect x="1434.4" y="345.7" width="8" height="21.3" rx="1" fill="#a6e1d8"/>
<rect x="1434.4" y="367.0" width="8" height="38.3" rx="1" fill="#f77b80"/>
<rect x="1445.4" y="360.6" width="8" height="6.4" rx="1" fill="#a6e1d8"/>
<rect x="1445.4" y="367.0" width="8" height="27.9" rx="1" fill="#f77b80"/>
<rect x="1456.3" y="340.4" width="8" height="26.6" rx="1" fill="#43b9a3"/>
<rect x="1456.3" y="367.0" width="8" height="10.8" rx="1" fill="#fdc9cc"/>
<rect x="1467.2" y="359.4" width="8" height="7.6" rx="1" fill="#a6e1d8"/>
<rect x="1467.2" y="367.0" width="8" height="45.2" rx="1" fill="#f77b80"/>
<rect x="1478.1" y="346.3" width="8" height="20.7" rx="1" fill="#43b9a3"/>
<rect x="1478.1" y="367.0" width="8" height="2.9" rx="1" fill="#fdc9cc"/>
<rect x="1489.0" y="358.7" width="8" height="8.3" rx="1" fill="#a6e1d8"/>
<rect x="1489.0" y="367.0" width="8" height="32.4" rx="1" fill="#f77b80"/>
<rect x="1499.9" y="315.0" width="8" height="52.0" rx="1" fill="#43b9a3"/>
<rect x="1499.9" y="367.0" width="8" height="25.9" rx="1" fill="#fdc9cc"/>
<rect x="1510.9" y="356.1" width="8" height="10.9" rx="1" fill="#a6e1d8"/>
<rect x="1510.9" y="367.0" width="8" height="43.2" rx="1" fill="#f77b80"/>
<rect x="1521.8" y="333.9" width="8" height="33.1" rx="1" fill="#a6e1d8"/>
<rect x="1521.8" y="367.0" width="8" height="52.7" rx="1" fill="#f77b80"/>
<rect x="16" y="366" width="1516" height="2" fill="#707070"/>
<polyline points="20.2,345.9 31.1,361.8 42.0,357.9 52.9,331.4 63.9,319.2 74.8,341.3 85.7,358.4 96.6,341.8 107.5,321.0 118.4,344.3 129.3,349.2 140.3,353.1 151.2,340.5 162.1,318.4 173.0,291.7 183.9,312.0 194.8,291.9 205.8,273.5 216.7,255.4 227.6,282.4 238.5,259.7 249.4,243.4 260.3,220.9 271.2,235.1 282.2,264.0 293.1,278.3 304.0,255.3 314.9,232.8 325.8,248.9 336.7,270.5 347.6,293.0 358.6,277.2 369.5,287.5 380.4,308.1 391.3,330.6 402.2,318.4 413.1,297.8 424.1,280.0 435.0,250.2 445.9,235.5 456.8,265.0 467.7,250.7 478.6,272.9 489.5,301.7 500.5,274.8 511.4,256.1 522.3,271.3 533.2,299.8 544.1,314.9 555.0,338.2 566.0,330.0 576.9,314.1 587.8,344.1 598.7,363.4 609.6,352.2 620.5,373.7 631.4,380.1 642.4,364.9 653.3,384.8 664.2,403.9 675.1,424.8 686.0,429.5 696.9,418.8 707.8,433.2 718.8,437.8 729.7,420.5 740.6,411.7 751.5,403.7 762.4,386.7 773.3,401.0 784.2,397.4 795.2,411.3 806.1,398.6 817.0,380.1 827.9,387.0 838.8,398.2 849.7,395.5 860.7,410.5 871.6,392.8 882.5,411.3 893.4,429.2 904.3,422.4 915.2,432.7 926.1,427.2 937.1,402.9 948.0,391.5 958.9,394.7 969.8,380.4 980.7,383.9 991.6,402.3 1002.5,388.3 1013.5,382.3 1024.4,403.4 1035.3,418.5 1046.2,403.5 1057.1,422.7 1068.0,434.2 1079.0,422.1 1089.9,426.5 1100.8,417.0 1111.7,431.7 1122.6,429.1 1133.5,446.9 1144.4,438.2 1155.4,441.7 1166.3,456.2 1177.2,445.1 1188.1,435.5 1199.0,452.1 1209.9,462.4 1220.8,470.6 1231.8,453.8 1242.7,433.0 1253.6,430.4 1264.5,413.1 1275.4,405.4 1286.3,387.5 1297.3,415.2 1308.2,435.1 1319.1,418.2 1330.0,396.7 1340.9,419.3 1351.8,432.4 1362.7,452.6 1373.7,450.0 1384.6,433.9 1395.5,449.2 1406.4,458.5 1417.3,469.3 1428.2,456.1 1439.1,465.9 1450.1,473.2 1461.0,466.3 1471.9,483.5 1482.8,480.7 1493.7,489.0 1504.6,473.6 1515.6,479.1 1526.5,491.3" fill="none" stroke="#089981" stroke-width="2.2" stroke-linejoin="round" clip-path="url(#cu)"/>
<polyline points="20.2,345.9 31.1,361.8 42.0,357.9 52.9,331.4 63.9,319.2 74.8,341.3 85.7,358.4 96.6,341.8 107.5,321.0 118.4,344.3 129.3,349.2 140.3,353.1 151.2,340.5 162.1,318.4 173.0,291.7 183.9,312.0 194.8,291.9 205.8,273.5 216.7,255.4 227.6,282.4 238.5,259.7 249.4,243.4 260.3,220.9 271.2,235.1 282.2,264.0 293.1,278.3 304.0,255.3 314.9,232.8 325.8,248.9 336.7,270.5 347.6,293.0 358.6,277.2 369.5,287.5 380.4,308.1 391.3,330.6 402.2,318.4 413.1,297.8 424.1,280.0 435.0,250.2 445.9,235.5 456.8,265.0 467.7,250.7 478.6,272.9 489.5,301.7 500.5,274.8 511.4,256.1 522.3,271.3 533.2,299.8 544.1,314.9 555.0,338.2 566.0,330.0 576.9,314.1 587.8,344.1 598.7,363.4 609.6,352.2 620.5,373.7 631.4,380.1 642.4,364.9 653.3,384.8 664.2,403.9 675.1,424.8 686.0,429.5 696.9,418.8 707.8,433.2 718.8,437.8 729.7,420.5 740.6,411.7 751.5,403.7 762.4,386.7 773.3,401.0 784.2,397.4 795.2,411.3 806.1,398.6 817.0,380.1 827.9,387.0 838.8,398.2 849.7,395.5 860.7,410.5 871.6,392.8 882.5,411.3 893.4,429.2 904.3,422.4 915.2,432.7 926.1,427.2 937.1,402.9 948.0,391.5 958.9,394.7 969.8,380.4 980.7,383.9 991.6,402.3 1002.5,388.3 1013.5,382.3 1024.4,403.4 1035.3,418.5 1046.2,403.5 1057.1,422.7 1068.0,434.2 1079.0,422.1 1089.9,426.5 1100.8,417.0 1111.7,431.7 1122.6,429.1 1133.5,446.9 1144.4,438.2 1155.4,441.7 1166.3,456.2 1177.2,445.1 1188.1,435.5 1199.0,452.1 1209.9,462.4 1220.8,470.6 1231.8,453.8 1242.7,433.0 1253.6,430.4 1264.5,413.1 1275.4,405.4 1286.3,387.5 1297.3,415.2 1308.2,435.1 1319.1,418.2 1330.0,396.7 1340.9,419.3 1351.8,432.4 1362.7,452.6 1373.7,450.0 1384.6,433.9 1395.5,449.2 1406.4,458.5 1417.3,469.3 1428.2,456.1 1439.1,465.9 1450.1,473.2 1461.0,466.3 1471.9,483.5 1482.8,480.7 1493.7,489.0 1504.6,473.6 1515.6,479.1 1526.5,491.3" fill="none" stroke="#f23645" stroke-width="2.2" stroke-linejoin="round" clip-path="url(#cd)"/>
<circle cx="20.2" cy="345.9" r="4.2" fill="#089981"/>
<circle cx="31.1" cy="361.8" r="4.2" fill="#089981"/>
<circle cx="42.0" cy="357.9" r="4.2" fill="#089981"/>
<circle cx="52.9" cy="331.4" r="4.2" fill="#089981"/>
<circle cx="63.9" cy="319.2" r="4.2" fill="#089981"/>
<circle cx="74.8" cy="341.3" r="4.2" fill="#089981"/>
<circle cx="85.7" cy="358.4" r="4.2" fill="#089981"/>
<circle cx="96.6" cy="341.8" r="4.2" fill="#089981"/>
<circle cx="107.5" cy="321.0" r="4.2" fill="#089981"/>
<circle cx="118.4" cy="344.3" r="4.2" fill="#089981"/>
<circle cx="129.3" cy="349.2" r="4.2" fill="#089981"/>
<circle cx="140.3" cy="353.1" r="4.2" fill="#089981"/>
<circle cx="151.2" cy="340.5" r="4.2" fill="#089981"/>
<circle cx="162.1" cy="318.4" r="4.2" fill="#089981"/>
<circle cx="173.0" cy="291.7" r="4.2" fill="#089981"/>
<circle cx="183.9" cy="312.0" r="4.2" fill="#089981"/>
<circle cx="194.8" cy="291.9" r="4.2" fill="#089981"/>
<circle cx="205.8" cy="273.5" r="4.2" fill="#089981"/>
<circle cx="216.7" cy="255.4" r="4.2" fill="#089981"/>
<circle cx="227.6" cy="282.4" r="4.2" fill="#089981"/>
<circle cx="238.5" cy="259.7" r="4.2" fill="#089981"/>
<circle cx="249.4" cy="243.4" r="4.2" fill="#089981"/>
<circle cx="260.3" cy="220.9" r="4.2" fill="#089981"/>
<circle cx="271.2" cy="235.1" r="4.2" fill="#089981"/>
<circle cx="282.2" cy="264.0" r="4.2" fill="#089981"/>
<circle cx="293.1" cy="278.3" r="4.2" fill="#089981"/>
<circle cx="304.0" cy="255.3" r="4.2" fill="#089981"/>
<circle cx="314.9" cy="232.8" r="4.2" fill="#089981"/>
<circle cx="325.8" cy="248.9" r="4.2" fill="#089981"/>
<circle cx="336.7" cy="270.5" r="4.2" fill="#089981"/>
<circle cx="347.6" cy="293.0" r="4.2" fill="#089981"/>
<circle cx="358.6" cy="277.2" r="4.2" fill="#089981"/>
<circle cx="369.5" cy="287.5" r="4.2" fill="#089981"/>
<circle cx="380.4" cy="308.1" r="4.2" fill="#089981"/>
<circle cx="391.3" cy="330.6" r="4.2" fill="#089981"/>
<circle cx="402.2" cy="318.4" r="4.2" fill="#089981"/>
<circle cx="413.1" cy="297.8" r="4.2" fill="#089981"/>
<circle cx="424.1" cy="280.0" r="4.2" fill="#089981"/>
<circle cx="435.0" cy="250.2" r="4.2" fill="#089981"/>
<circle cx="445.9" cy="235.5" r="4.2" fill="#089981"/>
<circle cx="456.8" cy="265.0" r="4.2" fill="#089981"/>
<circle cx="467.7" cy="250.7" r="4.2" fill="#089981"/>
<circle cx="478.6" cy="272.9" r="4.2" fill="#089981"/>
<circle cx="489.5" cy="301.7" r="4.2" fill="#089981"/>
<circle cx="500.5" cy="274.8" r="4.2" fill="#089981"/>
<circle cx="511.4" cy="256.1" r="4.2" fill="#089981"/>
<circle cx="522.3" cy="271.3" r="4.2" fill="#089981"/>
<circle cx="533.2" cy="299.8" r="4.2" fill="#089981"/>
<circle cx="544.1" cy="314.9" r="4.2" fill="#089981"/>
<circle cx="555.0" cy="338.2" r="4.2" fill="#089981"/>
<circle cx="566.0" cy="330.0" r="4.2" fill="#089981"/>
<circle cx="576.9" cy="314.1" r="4.2" fill="#089981"/>
<circle cx="587.8" cy="344.1" r="4.2" fill="#089981"/>
<circle cx="598.7" cy="363.4" r="4.2" fill="#089981"/>
<circle cx="609.6" cy="352.2" r="4.2" fill="#089981"/>
<circle cx="620.5" cy="373.7" r="4.2" fill="#f23645"/>
<circle cx="631.4" cy="380.1" r="4.2" fill="#f23645"/>
<circle cx="642.4" cy="364.9" r="4.2" fill="#089981"/>
<circle cx="653.3" cy="384.8" r="4.2" fill="#f23645"/>
<circle cx="664.2" cy="403.9" r="4.2" fill="#f23645"/>
<circle cx="675.1" cy="424.8" r="4.2" fill="#f23645"/>
<circle cx="686.0" cy="429.5" r="4.2" fill="#f23645"/>
<circle cx="696.9" cy="418.8" r="4.2" fill="#f23645"/>
<circle cx="707.8" cy="433.2" r="4.2" fill="#f23645"/>
<circle cx="718.8" cy="437.8" r="4.2" fill="#f23645"/>
<circle cx="729.7" cy="420.5" r="4.2" fill="#f23645"/>
<circle cx="740.6" cy="411.7" r="4.2" fill="#f23645"/>
<circle cx="751.5" cy="403.7" r="4.2" fill="#f23645"/>
<circle cx="762.4" cy="386.7" r="4.2" fill="#f23645"/>
<circle cx="773.3" cy="401.0" r="4.2" fill="#f23645"/>
<circle cx="784.2" cy="397.4" r="4.2" fill="#f23645"/>
<circle cx="795.2" cy="411.3" r="4.2" fill="#f23645"/>
<circle cx="806.1" cy="398.6" r="4.2" fill="#f23645"/>
<circle cx="817.0" cy="380.1" r="4.2" fill="#f23645"/>
<circle cx="827.9" cy="387.0" r="4.2" fill="#f23645"/>
<circle cx="838.8" cy="398.2" r="4.2" fill="#f23645"/>
<circle cx="849.7" cy="395.5" r="4.2" fill="#f23645"/>
<circle cx="860.7" cy="410.5" r="4.2" fill="#f23645"/>
<circle cx="871.6" cy="392.8" r="4.2" fill="#f23645"/>
<circle cx="882.5" cy="411.3" r="4.2" fill="#f23645"/>
<circle cx="893.4" cy="429.2" r="4.2" fill="#f23645"/>
<circle cx="904.3" cy="422.4" r="4.2" fill="#f23645"/>
<circle cx="915.2" cy="432.7" r="4.2" fill="#f23645"/>
<circle cx="926.1" cy="427.2" r="4.2" fill="#f23645"/>
<circle cx="937.1" cy="402.9" r="4.2" fill="#f23645"/>
<circle cx="948.0" cy="391.5" r="4.2" fill="#f23645"/>
<circle cx="958.9" cy="394.7" r="4.2" fill="#f23645"/>
<circle cx="969.8" cy="380.4" r="4.2" fill="#f23645"/>
<circle cx="980.7" cy="383.9" r="4.2" fill="#f23645"/>
<circle cx="991.6" cy="402.3" r="4.2" fill="#f23645"/>
<circle cx="1002.5" cy="388.3" r="4.2" fill="#f23645"/>
<circle cx="1013.5" cy="382.3" r="4.2" fill="#f23645"/>
<circle cx="1024.4" cy="403.4" r="4.2" fill="#f23645"/>
<circle cx="1035.3" cy="418.5" r="4.2" fill="#f23645"/>
<circle cx="1046.2" cy="403.5" r="4.2" fill="#f23645"/>
<circle cx="1057.1" cy="422.7" r="4.2" fill="#f23645"/>
<circle cx="1068.0" cy="434.2" r="4.2" fill="#f23645"/>
<circle cx="1079.0" cy="422.1" r="4.2" fill="#f23645"/>
<circle cx="1089.9" cy="426.5" r="4.2" fill="#f23645"/>
<circle cx="1100.8" cy="417.0" r="4.2" fill="#f23645"/>
<circle cx="1111.7" cy="431.7" r="4.2" fill="#f23645"/>
<circle cx="1122.6" cy="429.1" r="4.2" fill="#f23645"/>
<circle cx="1133.5" cy="446.9" r="4.2" fill="#f23645"/>
<circle cx="1144.4" cy="438.2" r="4.2" fill="#f23645"/>
<circle cx="1155.4" cy="441.7" r="4.2" fill="#f23645"/>
<circle cx="1166.3" cy="456.2" r="4.2" fill="#f23645"/>
<circle cx="1177.2" cy="445.1" r="4.2" fill="#f23645"/>
<circle cx="1188.1" cy="435.5" r="4.2" fill="#f23645"/>
<circle cx="1199.0" cy="452.1" r="4.2" fill="#f23645"/>
<circle cx="1209.9" cy="462.4" r="4.2" fill="#f23645"/>
<circle cx="1220.8" cy="470.6" r="4.2" fill="#f23645"/>
<circle cx="1231.8" cy="453.8" r="4.2" fill="#f23645"/>
<circle cx="1242.7" cy="433.0" r="4.2" fill="#f23645"/>
<circle cx="1253.6" cy="430.4" r="4.2" fill="#f23645"/>
<circle cx="1264.5" cy="413.1" r="4.2" fill="#f23645"/>
<circle cx="1275.4" cy="405.4" r="4.2" fill="#f23645"/>
<circle cx="1286.3" cy="387.5" r="4.2" fill="#f23645"/>
<circle cx="1297.3" cy="415.2" r="4.2" fill="#f23645"/>
<circle cx="1308.2" cy="435.1" r="4.2" fill="#f23645"/>
<circle cx="1319.1" cy="418.2" r="4.2" fill="#f23645"/>
<circle cx="1330.0" cy="396.7" r="4.2" fill="#f23645"/>
<circle cx="1340.9" cy="419.3" r="4.2" fill="#f23645"/>
<circle cx="1351.8" cy="432.4" r="4.2" fill="#f23645"/>
<circle cx="1362.7" cy="452.6" r="4.2" fill="#f23645"/>
<circle cx="1373.7" cy="450.0" r="4.2" fill="#f23645"/>
<circle cx="1384.6" cy="433.9" r="4.2" fill="#f23645"/>
<circle cx="1395.5" cy="449.2" r="4.2" fill="#f23645"/>
<circle cx="1406.4" cy="458.5" r="4.2" fill="#f23645"/>
<circle cx="1417.3" cy="469.3" r="4.2" fill="#f23645"/>
<circle cx="1428.2" cy="456.1" r="4.2" fill="#f23645"/>
<circle cx="1439.1" cy="465.9" r="4.2" fill="#f23645"/>
<circle cx="1450.1" cy="473.2" r="4.2" fill="#f23645"/>
<circle cx="1461.0" cy="466.3" r="4.2" fill="#f23645"/>
<circle cx="1471.9" cy="483.5" r="4.2" fill="#f23645"/>
<circle cx="1482.8" cy="480.7" r="4.2" fill="#f23645"/>
<circle cx="1493.7" cy="489.0" r="4.2" fill="#f23645"/>
<circle cx="1504.6" cy="473.6" r="4.2" fill="#f23645"/>
<circle cx="1515.6" cy="479.1" r="4.2" fill="#f23645"/>
<circle cx="1526.5" cy="491.3" r="4.2" fill="#f23645"/>
<rect x="31" y="497" width="33" height="4" fill="#7fc9b9"/>
<rect x="65" y="497" width="21" height="4" fill="#f59ba1"/>
<rect x="87" y="497" width="86" height="4" fill="#7fc9b9"/>
<rect x="184" y="497" width="33" height="4" fill="#7fc9b9"/>
<rect x="228" y="497" width="32" height="4" fill="#7fc9b9"/>
<rect x="261.2" y="497" width="1264.8" height="4" fill="#f59ba1"/>
</svg>
<div class="leg" style="top:215px">Equity</div>
<div class="a" style="left:15px;top:236px;width:98px;height:25px;background:rgba(255,255,255,.6)"></div>
<div class="a" style="left:15px;top:261px;width:107px;height:25px;background:rgba(255,255,255,.6)"></div>
<div class="a" style="left:15px;top:286px;width:123px;height:25px;background:rgba(255,255,255,.6)"></div>
<div class="leg" style="top:240px;color:#b4b4b4">Buy &amp; hold</div>
<svg class="a" style="left:85px;top:236px" width="30" height="24" viewBox="0 0 30 24"><path d="M7.3 12.9C9.3 9 12 7.3 15 7.3S20.7 9 22.7 12.9C20.7 16.8 18 18.5 15 18.5S9.3 16.8 7.3 12.9Z" fill="none" stroke="#0f0f0f" stroke-width="1.2"/><circle cx="15" cy="12.9" r="3" fill="none" stroke="#0f0f0f" stroke-width="1.2"/><path d="M9.2 18.6L20.6 7.2" stroke="#fff" stroke-width="3.4"/><path d="M9.2 18.6L20.6 7.2" stroke="#0f0f0f" stroke-width="1.2"/></svg>
<div class="leg" style="top:265px">Trades excursions</div>
<div class="leg" style="top:290px">Run-up / Drawdowns</div>
<div class="a" style="left:16px;top:316px;width:29px;height:21px;border:1px solid #e8e8e8;border-radius:5px;background:rgba(255,255,255,.6)"></div>
<svg class="a" style="left:24.5px;top:321px" width="12" height="12" viewBox="0 0 12 12"><path d="M2.5 7.5 L6 4 L9.5 7.5" fill="none" stroke="#0f0f0f" stroke-width="1.4"/></svg>
<div class="ylab" style="top:326.7px">5,000.00</div>
<div class="ylab" style="top:359.8px">0</div>
<div class="ylab" style="top:390.7px">−5,000.00</div>
<div class="ylab" style="top:422.0px">−10,000.00</div>
<div class="ylab" style="top:453.7px">−15,000.00</div>
<div class="a" style="left:1539.5px;top:484px;width:73.5px;height:16.5px;background:#f23645;border-radius:2.5px;color:#fff;font-size:12px;line-height:16.5px;padding-left:8.5px">−19,790.69</div>
<div class="xlab" style="left:75px;">Feb</div>
<div class="xlab" style="left:173.2px;">Mar</div>
<div class="xlab" style="left:282px;">May</div>
<div class="xlab" style="left:423.6px;">Jul</div>
<div class="xlab" style="left:522.1px;">Sep</div>
<div class="xlab" style="left:674.9px;">Nov</div>
<div class="xlab" style="left:761.9px;font-weight:bold;">2025</div>
<div class="xlab" style="left:882px;">Mar</div>
<div class="xlab" style="left:991.3px;">Jun</div>
<div class="xlab" style="left:1099.8px;">Aug</div>
<div class="xlab" style="left:1219.9px;">Oct</div>
<div class="xlab" style="left:1318.4px;">Dec</div>
<div class="xlab" style="left:1427px;font-weight:bold;">2026</div>
<div class="xlab" style="left:1514.3px;">Feb</div>

<!-- performance card -->
<div class="card"></div>
<svg class="a" style="left:35px;top:577px" width="14" height="12" viewBox="0 0 14 12"><path d="M1.6 2.6 L6.8 7.6 L12 2.6" fill="none" stroke="#3a3a3a" stroke-width="1.5"/></svg>
<div class="a" style="left:59px;top:572px;font-size:18px;font-weight:bold;line-height:20px">Performance</div>

<div class="sub" style="left:33px;top:621px">Profit structure</div>
<div class="sub" style="left:823px;top:621px">Benchmarking</div>
<svg class="a" style="left:0;top:540px" width="1614" height="300" viewBox="0 540 1614 300">
<rect x="33" y="657" width="695" height="1" fill="#efefef"/>
<rect x="33" y="699" width="695" height="1" fill="#efefef"/>
<rect x="33" y="741" width="695" height="1" fill="#efefef"/>
<rect x="33" y="824" width="695" height="1" fill="#efefef"/>
<rect x="33" y="782" width="695" height="1" fill="#707070"/>
<rect x="90" y="669" width="60" height="114" fill="#089981"/>
<rect x="264" y="669" width="60" height="117.5" fill="#f23645"/>
<rect x="438" y="786.5" width="60" height="9" fill="#ff9800"/>
<rect x="611" y="782" width="60" height="13.5" fill="#3179f5"/>
<path d="M150 669.5H264M324 786.5H438M498 795.5H611" stroke="#555" stroke-width="1" stroke-dasharray="3 2" fill="none"/>

<rect x="823" y="659" width="694" height="1" fill="#efefef"/>
<rect x="823" y="691" width="694" height="1" fill="#efefef"/>
<rect x="823" y="735" width="694" height="1" fill="#efefef"/>
<rect x="823" y="821" width="694" height="1" fill="#efefef"/>
<path d="M884 692H1110V783H884Q881 783 881 780V695Q881 692 884 692Z" fill="#fdca84"/>
<path d="M881 754H1110V780H881Z" fill="#fd9200"/>
<polygon points="1110,692 1170,780 1110,783" fill="#fef0de"/>
<polygon points="1110,754 1170,780 1110,783" fill="#fde2c0"/>
<path d="M1110 692L1170 780M1110 754L1170 780M1110 783L1170 780" stroke="#f7a030" stroke-width="1" stroke-dasharray="3 2" fill="none"/>
<rect x="1228" y="770.2" width="229" height="18.2" rx="3" fill="#93b7fa"/>
<path d="M1228 780.5H1454Q1457 780.5 1457 783.5V785.4Q1457 788.4 1454 788.4H1228Z" fill="#3179f5"/>
<polygon points="1170,780 1228,770 1228,789" fill="#dbe7fd"/>
<path d="M1170 780L1228 770M1170 780L1228 780M1170 780L1228 789" stroke="#3179f5" stroke-width="1" stroke-dasharray="3 2" fill="none"/>
<rect x="823" y="780" width="694" height="1" fill="#707070"/>
<circle cx="1170" cy="780" r="3.2" fill="#6a6a6a"/>
</svg>
<div class="axl" style="left:690px;width:100px;text-align:right;top:651.5px">180.00 K</div>
<div class="axl" style="left:690px;width:100px;text-align:right;top:692.5px">120.00 K</div>
<div class="axl" style="left:690px;width:100px;text-align:right;top:732.5px">60.00 K</div>
<div class="axl" style="left:690px;width:100px;text-align:right;top:773px">0.00</div>
<div class="axl" style="left:690px;width:100px;text-align:right;top:813.5px">−60.00 K</div>

<div class="axl" style="left:1526.3px;top:653px;font-size:11px">270.00%</div>
<div class="axl" style="left:1526.3px;top:685px;font-size:11px">200.00%</div>
<div class="axl" style="left:1526.3px;top:729px;font-size:11px">100.00%</div>
<div class="axl" style="left:1526.3px;top:774px;font-size:11px">0.00%</div>
<div class="axl" style="left:1526.3px;top:815px;font-size:11px">−90.00%</div>

<div class="bl" style="top:683px;background:#f88a05"><span>Max</span><b>196.93%</b></div>
<div class="bl" style="top:745px;background:#ec6a05;line-height:17px"><span>Current</span><b>57.75%</b></div>
<div class="bl" style="top:774px;background:#f88a05;line-height:17.6px"><span>Min</span><b>−6.58%</b></div>
<div class="bl bb" style="top:761px;background:#3179f5"><span>Max</span><b>22.99%</b></div>
<div class="bl bb" style="top:780px;background:#1f5fe6;border-radius:0;line-height:17.6px"><span>Current</span><b>−19.79%</b></div>
<div class="bl bb" style="top:798.5px;background:#3179f5"><span>Min</span><b>−19.79%</b></div>

<div class="dot" style="left:235px;background:#089981"></div><div class="lg" style="left:251px">Total profit</div>
<div class="dot" style="left:327px;background:#f23645"></div><div class="lg" style="left:343px">Total loss</div>
<div class="dot" style="left:414px;background:#ff9800"></div><div class="lg" style="left:429.5px">Commission</div>
<div class="dot" style="left:517px;background:#3179f5"></div><div class="lg" style="left:533px">Total P&amp;L</div>
<div class="dot" style="left:1078px;background:#ff9800"></div><div class="lg" style="left:1094px">P&amp;L for buy &amp; hold</div>
<div class="dot" style="left:1217.5px;background:#3179f5"></div><div class="lg" style="left:1233.5px">P&amp;L for strategy</div>


<!-- returns -->
<div class="a" style="left:17px;top:874px;width:1580px;height:40px;background:#f9f9f9"></div>
<div class="sub" style="left:33px;top:886px">Returns</div>
<div class="a" style="left:33px;top:926px;font-size:14px;line-height:16px;color:#6b6b6b">Metric</div>
<div class="a" style="left:587px;width:50px;text-align:right;top:926px;font-size:14px;line-height:16px;color:#6b6b6b">All</div>
<div class="a" style="left:922px;top:926px;font-size:14px;line-height:16px;color:#6b6b6b">Long</div>
<div class="a" style="left:1236px;top:926px;font-size:14px;line-height:16px;color:#6b6b6b">Short</div>
<div class="a" style="left:17px;top:955px;width:1580px;height:1px;background:#ebebeb"></div>
<div class="a" style="left:33px;top:976px;font-size:14px;line-height:16px">Initial capital</div>
<div class="a" style="left:437px;width:200px;text-align:right;top:974px;font-size:14px;line-height:16px">100,000.00<span style="font-size:10px;margin-left:3px">USD</span></div>
<div class="a" style="left:17px;top:1012px;width:1580px;height:1px;background:#ebebeb"></div>
<div class="a" style="left:33px;top:1032.5px;font-size:14px;line-height:16px">Open P&amp;L</div>
<div class="a" style="left:437px;width:200px;text-align:right;top:1022px;font-size:14px;line-height:16px">0<span style="font-size:10px;margin-left:3px">USD</span></div>

<!-- dropdown -->
<div class="dd">
  <div class="a" style="left:6px;top:6px;width:228px;height:32px;background:#2e2e2e;border-radius:6px"></div>
  <div class="ddi" style="top:14px;color:#fff">Range from chart</div>
  <div class="sep" style="top:44px"></div>
  <div class="ddi" style="top:56px;font-size:11px;color:#6b6b6b;letter-spacing:.4px">OTHER RANGES</div>
  <div class="ddi" style="top:83px">Last 7 days</div>
  <div class="ddi" style="top:115px">Last 30 days</div>
  <div class="ddi" style="top:147px">Last 90 days</div>
  <div class="ddi" style="top:179px">Last 365 days</div>
  <div class="ddi" style="top:211px">Entire history</div>
  <div class="sep" style="top:241px"></div>
  <svg class="a" style="left:14px;top:252.7px" width="20" height="20" viewBox="0 0 20 20"><rect x="1.4" y="3.2" width="16.9" height="14.6" rx="2.3" fill="none" stroke="#0f0f0f" stroke-width="1.2"/><path d="M1.4 7.2H18.3M5.4 1.6V4.6M14.5 1.6V4.6" stroke="#0f0f0f" stroke-width="1.2" stroke-linecap="round"/></svg>
  <div class="ddi" style="left:42px;top:256px">Custom date range…</div>
</div>
</body></html>
